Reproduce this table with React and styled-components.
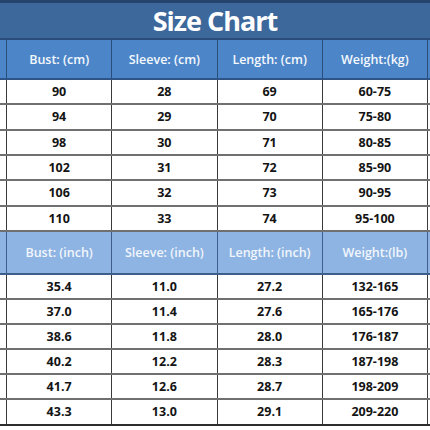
import React from "react";
import styled, { createGlobalStyle } from "styled-components";

const Global = createGlobalStyle`
  html, body { margin: 0; padding: 0; background: #ffffff; }
  body { font-family: "Open Sans", "Noto Sans", sans-serif; }
`;

const Page = styled.div`
  width: 430px;
  height: 430px;
  overflow: hidden;
  background: #ffffff;
`;

const Title = styled.div`
  height: 35px;
  border-top: 3px solid #24446e;
  border-bottom: 2px solid #2b4d7c;
  background: #3c689c;
  display: flex;
  align-items: center;
  justify-content: center;
  color: #ffffff;
  font-weight: 700;
  font-size: 27px;
  letter-spacing: -1px;
  padding-top: 0;
`;

const Row = styled.div`
  display: grid;
  grid-template-columns: 6px repeat(4, 105.25px) 3px;
  height: ${(p) => p.$h}px;
  box-sizing: border-box;
  background: ${(p) => p.$bg || "#ffffff"};
  border-bottom: ${(p) => p.$line};
`;

const Cell = styled.div`
  display: flex;
  align-items: center;
  justify-content: center;
  box-sizing: border-box;
  border-left: ${(p) => (p.$first ? "none" : `1.5px solid ${p.$edge}`)};
  font-size: 12.5px;
  font-weight: ${(p) => (p.$head ? 600 : 700)};
  color: ${(p) => p.$color};
  white-space: nowrap;
`;

const head1 = ["Bust: (cm)", "Sleeve: (cm)", "Length: (cm)", "Weight:(kg)"];
const cm = [
  ["90", "28", "69", "60-75"],
  ["94", "29", "70", "75-80"],
  ["98", "30", "71", "80-85"],
  ["102", "31", "72", "85-90"],
  ["106", "32", "73", "90-95"],
  ["110", "33", "74", "95-100"],
];
const head2 = ["Bust: (inch)", "Sleeve: (inch)", "Length: (inch)", "Weight:(lb)"];
const inch = [
  ["35.4", "11.0", "27.2", "132-165"],
  ["37.0", "11.4", "27.6", "165-176"],
  ["38.6", "11.8", "28.0", "176-187"],
  ["40.2", "12.2", "28.3", "187-198"],
  ["41.7", "12.6", "28.7", "198-209"],
  ["43.3", "13.0", "29.1", "209-220"],
];

function Line({ cells, h, bg, line, edge, color, head }) {
  return (
    <Row $h={h} $bg={bg} $line={line}>
      <Cell $first $edge={edge} $color={color} $head={head} />
      {cells.map((c, i) => (
        <Cell key={i} $edge={edge} $color={color} $head={head}>
          {c}
        </Cell>
      ))}
      <Cell $edge={edge} $color={color} $head={head} />
    </Row>
  );
}

export default function App() {
  return (
    <Page>
      <Global />
      <Title>Size Chart</Title>
      <Line cells={head1} h={40} bg="#4d86c8" line="2px solid #2f5384" edge="#2c4c7a" color="#f4f8fd" head />
      {cm.map((r, i) => (
        <Line key={i} cells={r} h={i % 3 === 1 ? 25.34 : 25.33} line="2px solid #707070" edge="#3a3a3a" color="#141414" />
      ))}
      <Line cells={head2} h={43} bg="#8db4e2" line="2px solid #3e5f8c" edge="#3e5f8c" color="#f2f6fc" head />
      {inch.map((r, i) => (
        <Line key={i} cells={r} h={i === 5 ? 26 : 25} line={i === 5 ? "2px solid #2e2e2e" : "2px solid #707070"} edge="#3a3a3a" color="#141414" />
      ))}
    </Page>
  );
}
